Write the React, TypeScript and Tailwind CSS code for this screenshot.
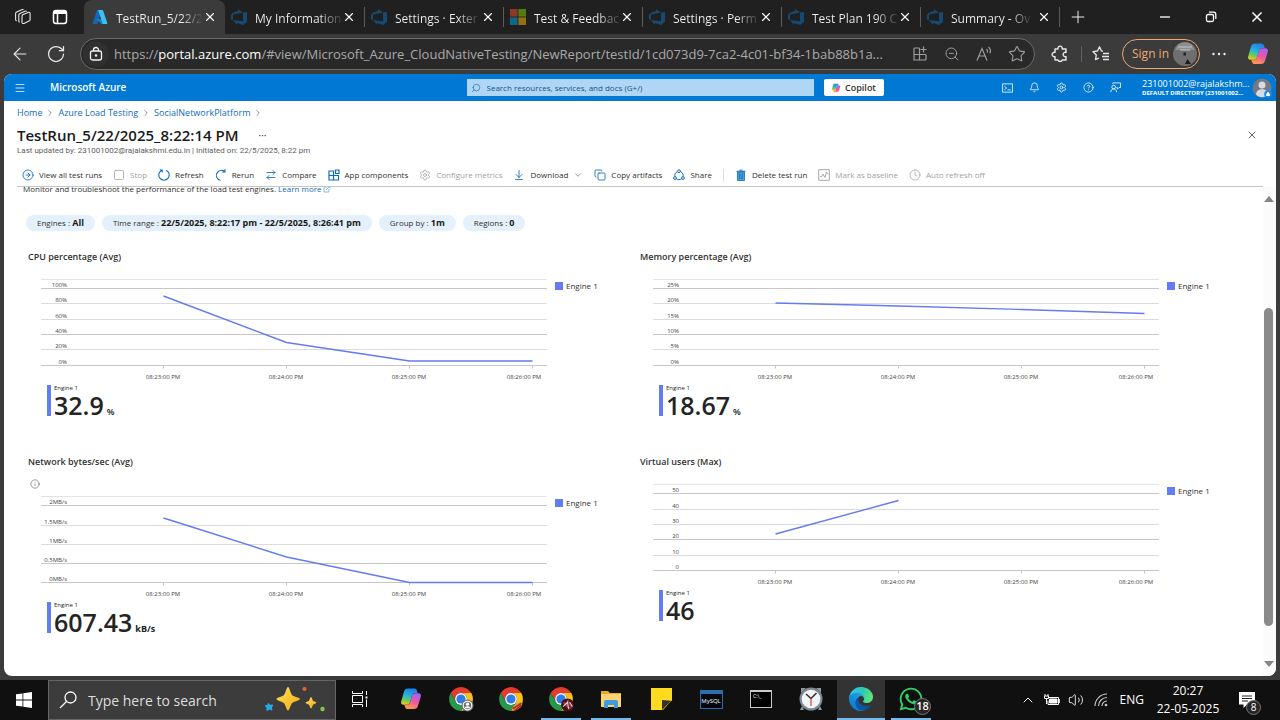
import React from "react";
import {
  ArrowLeft, RotateCw, X, Plus, Star, ZoomOut, Search, Menu, Bell, Settings,
  CircleHelp, Square, Copy, ChevronRight, ChevronDown, ChevronUp, Info, ExternalLink,
  CircleArrowRight, ArrowRightLeft, ArrowDownToLine, Clock, Volume2,
} from "lucide-react";
import { FaWhatsapp } from "react-icons/fa";

function AzureLogo() {
  return (
    <svg viewBox="0 0 96 96" className="size-4 shrink-0" aria-hidden="true">
      <path fill="#1767b0" d="M33.3 6.5h26L32.4 86.6a4.2 4.2 0 0 1-4 2.9H8.2a4.1 4.1 0 0 1-4-5.5L29.4 9.4a4.2 4.2 0 0 1 3.9-2.9z" />
      <path fill="#0f7fd4" d="M71.2 60.3H29.9a1.9 1.9 0 0 0-1.3 3.3l26.5 24.7a4.2 4.2 0 0 0 2.9 1.2h23.3z" />
      <path fill="#3cc0f2" d="M66.6 9.4a4.1 4.1 0 0 0-3.9-2.9H33.7a4.2 4.2 0 0 1 3.9 2.9L62.8 84a4.2 4.2 0 0 1-4 5.5h29a4.2 4.2 0 0 0 4-5.5z" />
    </svg>
  );
}

function DevOpsLogo() {
  return (
    <svg viewBox="0 0 24 24" className="size-4 shrink-0" aria-hidden="true">
      <path fill="#174a73" d="M0 8.877 2.247 5.91l8.405-3.416V.022l7.37 5.393L2.966 8.338v8.225L0 15.707zm24-4.45v14.651l-5.753 4.9-9.303-3.057v3.056l-5.978-7.416 15.057 1.798V5.415z" />
    </svg>
  );
}

function MicrosoftLogo() {
  return (
    <svg viewBox="0 0 16 16" className="size-4 shrink-0" aria-hidden="true">
      <path fill="#8c3a25" d="M0 0h7.6v7.6H0z" />
      <path fill="#557a16" d="M8.4 0H16v7.6H8.4z" />
      <path fill="#0f6687" d="M0 8.4h7.6V16H0z" />
      <path fill="#94700f" d="M8.4 8.4H16V16H8.4z" />
    </svg>
  );
}

function CopilotLogo({ id, className }: { id: string; className: string }) {
  return (
    <svg viewBox="0 0 24 24" className={className} aria-hidden="true">
      <defs>
        <linearGradient id={id + "a"} x1="0.6" y1="0" x2="0.3" y2="1">
          <stop offset="0" stopColor="#1f7fe8" />
          <stop offset="0.45" stopColor="#22b5dd" />
          <stop offset="0.75" stopColor="#6ccb5a" />
          <stop offset="1" stopColor="#f3c51c" />
        </linearGradient>
        <linearGradient id={id + "b"} x1="0.7" y1="0" x2="0.3" y2="1">
          <stop offset="0" stopColor="#a463f5" />
          <stop offset="0.5" stopColor="#f0569f" />
          <stop offset="1" stopColor="#ff9a4d" />
        </linearGradient>
      </defs>
      <path fill={`url(#${id}b)`} d="M15 22H8.5c-1.2 0-2-.7-2.4-1.8L5.4 18H8c1.6 0 2.6-1 3-2.4L13 8.6C13.5 7 14.4 6.2 16 6.2h3.5c1.9 0 2.9 1.6 2.3 3.6L19 18.8C18.4 21 17.1 22 15 22z" />
      <path fill={`url(#${id}a)`} d="M9 1.5h6.5c1.2 0 2 .7 2.4 1.8l.8 2.7H16c-1.6 0-2.6 1-3 2.4l-2 6.8c-.5 1.7-1.4 2.6-3 2.6H4.5c-1.9 0-2.9-1.6-2.3-3.6L5 4.8C5.6 2.6 6.9 1.5 9 1.5z" />
    </svg>
  );
}

function ChromeLogo({ badge }: { badge: string }) {
  return (
    <svg viewBox="0 0 48 48" className="size-[26px]" aria-hidden="true">
      <path fill="#e33b2e" d="M4.95 13A22 22 0 0 1 43.05 13H24a11 11 0 0 0-9.53 16.5z" />
      <path fill="#fbc116" d="M43.05 13A22 22 0 0 1 24 46l9.53-16.5A11 11 0 0 0 24 13z" />
      <path fill="#279847" d="M24 46A22 22 0 0 1 4.95 13l9.52 16.5a11 11 0 0 0 19.06 0z" />
      <circle cx="24" cy="24" r="11" fill="#fff" />
      <circle cx="24" cy="24" r="8.5" fill="#2f7de9" />
      {badge === "guest" && (
        <g>
          <circle cx="36" cy="36" r="11" fill="#6d7175" />
          <circle cx="36" cy="36" r="8" fill="none" stroke="#fff" strokeWidth="2" />
          <circle cx="36" cy="33.5" r="3" fill="#fff" />
          <path d="M30.5 41c1-5 10-5 11 0z" fill="#fff" />
        </g>
      )}
      {badge === "food" && (
        <g>
          <path d="M25 42c4-7 12-13 20-13 1 8-6 16-17 16z" fill="#d9a03c" />
          <path d="m27 42 16-10M31 45l12-9" stroke="#b32820" strokeWidth="3" />
        </g>
      )}
      {badge === "photo" && (
        <g>
          <circle cx="36" cy="35" r="12" fill="#3d1419" />
          <path d="m29 30 12 13M36 26l8 14" stroke="#a8313a" strokeWidth="4" />
          <path d="m28 38 8-8 2 12M40 30l5 8" stroke="#e4d7d7" strokeWidth="2" fill="none" />
        </g>
      )}
    </svg>
  );
}

function EdgeLogo() {
  return (
    <svg viewBox="0 0 256 256" className="size-6" aria-hidden="true">
      <defs>
        <linearGradient id="edge1" x1="0.2" y1="0.5" x2="1" y2="0.5"><stop stopColor="#0c59a4" /><stop offset="1" stopColor="#114a8b" /></linearGradient>
        <linearGradient id="edge2" x1="0.7" y1="0.2" x2="0.2" y2="0.9"><stop stopColor="#1b9de2" /><stop offset="1" stopColor="#0d7bd0" /></linearGradient>
        <linearGradient id="edge3" x1="0" y1="0.4" x2="1" y2="0.6"><stop stopColor="#35c1f1" /><stop offset="0.5" stopColor="#2dc7b8" /><stop offset="1" stopColor="#66eb6e" /></linearGradient>
      </defs>
      <path fill="url(#edge1)" d="M231 190.5c-3.4 1.8-6.9 3.4-10.5 4.7a101.5 101.5 0 0 1-35.9 6.5c-47.3 0-88.5-32.5-88.5-74.3a31.5 31.5 0 0 1 16.4-27.3c-42.8 1.8-53.8 46.4-53.8 72.5 0 74 68.1 81.4 82.8 81.4 7.9 0 19.8-2.3 27-4.6l1.3-.4a128.3 128.3 0 0 0 66.6-52.8 4 4 0 0 0-5.4-5.7z" />
      <path fill="url(#edge2)" d="M105.7 241.4A79.2 79.2 0 0 1 83 220.1a80.7 80.7 0 0 1 29.5-120c3.2-1.5 8.5-4.1 15.6-4a32.4 32.4 0 0 1 25.7 13 31.9 31.9 0 0 1 6.3 18.7c0-.2 24.5-79.6-80-79.6-43.9 0-80 41.7-80 78.2a130.2 130.2 0 0 0 12.1 56 128 128 0 0 0 156.4 67 75.5 75.5 0 0 1-62.9-8z" />
      <path fill="url(#edge3)" d="M152.3 148.9c-.8 1-3.3 2.5-3.3 5.6 0 2.6 1.7 5.1 4.7 7.2 14.4 10 41.5 8.7 41.6 8.7 10.7 0 21.1-2.9 30.3-8.3a61.4 61.4 0 0 0 30.4-52.9c.3-22.4-8-37.3-11.3-43.9C223.5 24 177.7.3 128 .3A128 128 0 0 0 0 126.5c.5-36.5 36.8-66 80-66 3.5 0 23.5.3 42 10.1 16.3 8.6 24.9 18.9 30.8 29.2 6.2 10.7 7.3 24.1 7.3 29.5 0 5.3-2.7 13.3-7.8 19.6z" />
    </svg>
  );
}

const tabs = [
  { title: "My Information", logo: "devops" },
  { title: "Settings · Exter", logo: "devops" },
  { title: "Test & Feedbac", logo: "microsoft" },
  { title: "Settings · Perm", logo: "devops" },
  { title: "Test Plan 190 C", logo: "devops" },
  { title: "Summary - Ov", logo: "devops" },
];

function TabTitle({ children }: { children: React.ReactNode }) {
  return (
    <span className="min-w-0 flex-1 whitespace-nowrap text-[#f2f2f2]">
      <span className="inline-block bg-linear-to-r from-[#f2f2f2] from-75% to-[#3c3c3c] bg-clip-text text-[12px] leading-5 text-transparent">
        {children}
      </span>
    </span>
  );
}

function TabStrip() {
  return (
    <div className="flex h-[34px] shrink-0 bg-[#202020] text-white">
      <div className="flex w-[84px] shrink-0 items-center justify-end gap-5 rounded-br-lg bg-[#202020] pr-4">
        <button aria-label="Workspaces">
          <svg viewBox="0 0 18 18" className="size-[18px]" fill="none" stroke="#e8e8e8" strokeWidth="1.1" strokeLinejoin="round">
            <path d="M8 8.2c0-.8.4-1.300 1.100-1.600l5-2.200c1.100-.4 2 .1 2 1.200v5.900c0 .8-.4 1.300-1.100 1.600l-5 2.300c-1.100.4-2-.1-2-1.200z" />
            <path d="M5.800 14.300c-.7-.2-1-.7-1-1.300V7c0-.8.400-1.300 1.100-1.600l5-2.200c.8-.3 1.500-.2 1.800.4" />
            <path d="M2.600 12.900c-.7-.2-1-.7-1-1.300V5.500c0-.8.400-1.300 1.100-1.600l5-2.200c.8-.3 1.500-.2 1.800.4" />
          </svg>
        </button>
        <button aria-label="Tab actions">
          <svg viewBox="0 0 16 16" className="size-4" fill="none" stroke="#fff" strokeWidth="1.5">
            <rect x="1.5" y="1.5" width="13" height="13" rx="2.5" />
            <path d="M2 3.5h12" strokeWidth="3" /><path d="M5.500 4v10" />
          </svg>
        </button>
      </div>
      <div className="flex w-[141px] shrink-0 items-center gap-2 rounded-t-lg bg-[#3b3b3b] pr-2 pl-2">
        <AzureLogo />
        <TabTitle>TestRun_5/22/2</TabTitle>
        <button aria-label="Close tab"><X className="size-3.5" strokeWidth={2} /></button>
      </div>
      {tabs.map((t, i) => (
        <div key={i} className={i === 0 ? "flex w-[140px] shrink-0 items-center gap-2 rounded-bl-lg bg-[#202020] pl-1.5" : "flex w-[139px] shrink-0 items-center gap-2 pl-1.5"}>
          {t.logo === "microsoft" ? <MicrosoftLogo /> : <DevOpsLogo />}
          <TabTitle>{t.title}</TabTitle>
          <button aria-label="Close tab"><X className="size-3.5" strokeWidth={2} /></button>
          <span className="h-5 w-px bg-[#5c5c5c]" />
        </div>
      ))}
      <button aria-label="New tab" className="ml-2 shrink-0"><Plus className="size-5" strokeWidth={1.1} /></button>
      <div className="ml-auto flex shrink-0 items-center gap-[34px] pr-[17px]">
        <button aria-label="Minimize"><svg viewBox="0 0 12 12" className="size-3" stroke="#fff" strokeWidth="1.3"><path d="M1 6h10" /></svg></button>
        <button aria-label="Restore">
          <svg viewBox="0 0 12 12" className="size-3" fill="none" stroke="#fff" strokeWidth="1.3"><rect x="1.5" y="3.5" width="7" height="7" rx="1.5" /><path d="M4 1.200h4.500c1.400 0 2.300.8 2.300 2.300V8" /></svg>
        </button>
        <button aria-label="Close window"><svg viewBox="0 0 12 12" className="size-3" stroke="#fff" strokeWidth="1.5"><path d="m1.500 1.500 9 9M10.500 1.500l-9 9" /></svg></button>
      </div>
    </div>
  );
}

function AddressBar() {
  return (
    <div className="flex h-10 shrink-0 items-center bg-[#3b3b3b] pl-2.5 text-[#e8e8e8]">
      <button aria-label="Back" className="w-5"><ArrowLeft className="size-5" strokeWidth={1.3} /></button>
      <button aria-label="Reload" className="ml-4 w-5"><RotateCw className="size-5" strokeWidth={1.5} /></button>
      <div className="ml-3.5 flex h-8 min-w-0 flex-1 items-center rounded-full border border-[#6b6b6b] bg-[#292929] pr-2 pl-0.5">
        <span className="flex size-[26px] shrink-0 items-center justify-center rounded-full bg-[#303030]">
          <svg viewBox="0 0 16 16" className="size-4" fill="none" stroke="#f2f2f2" strokeWidth="1.3"><rect x="2.500" y="5" width="11" height="9" rx="2" /><path d="M5.500 5V4a2.500 2.500 0 0 1 5 0v1" /><circle cx="8" cy="9.500" r="0.6" fill="#fff" /></svg>
        </span>
        <span className="ml-[5px] min-w-0 flex-1 truncate text-[13px] leading-6 text-[#a9a9a9]">
          https://<span className="text-white">portal.azure.com</span>/#view/Microsoft_Azure_CloudNativeTesting/NewReport/testId/1cd073d9-7ca2-4c01-bf34-1bab88b1a...
        </span>
        <div className="ml-2.5 flex shrink-0 items-center gap-4 text-[#9d9d9d]">
          <button aria-label="Install app">
            <svg viewBox="0 0 16 16" className="size-4" fill="none" stroke="currentColor" strokeWidth="1.2"><path d="M7.500 2H3a1 1 0 0 0-1 1v11h11a1 1 0 0 0 1-1V8.500M2 8.500h12M7.500 2v12M11.500.500v6M8.500 3.500h6" /></svg>
          </button>
          <button aria-label="Zoom out"><ZoomOut className="size-4" strokeWidth={1.5} /></button>
          <button aria-label="Read aloud">
            <svg viewBox="0 0 16 16" className="size-4" fill="none" stroke="currentColor" strokeWidth="1.2"><path d="M1 14.500 6 2.500l5 12M3 10h6M10.500 3c1 .8 1.300 2 .8 3.500M12.500 1c1.900 1.500 2.400 4 1.300 6.300" /></svg>
          </button>
          <button aria-label="Add to favorites"><Star className="size-[18px]" strokeWidth={1.5} /></button>
        </div>
      </div>
      <div className="flex shrink-0 items-center pl-4">
        <button aria-label="Extensions">
          <svg viewBox="0 0 18 18" className="size-[18px]" fill="none" stroke="currentColor" strokeWidth="1.4" strokeLinejoin="round">
            <path d="M4 4h3a2.200 2.200 0 1 1 4.200 0H15v3.400a2.200 2.200 0 1 0 0 4.200V15h-3.800a2.200 2.200 0 0 1-4.200 0H4v-3.400a2.200 2.200 0 1 1 0-4.200z" />
          </svg>
        </button>
        <span className="ml-3 h-4 w-px bg-[#606060]" />
        <button aria-label="Favorites" className="ml-2.5">
          <svg viewBox="0 0 18 18" className="size-[18px]" fill="none" stroke="currentColor" strokeWidth="1.3" strokeLinejoin="round"><path d="M11 6.200 9.500 6 7.500 1.800 5.500 6l-4.500.7 3.300 3.300-.8 4.700L7 13M11 8.500h6M10 11.500h7M11 14.500h6" /></svg>
        </button>
        <button className="ml-3 flex h-[30px] w-[78px] items-center justify-between rounded-full border border-[#f0a870] pr-0.5 pl-[9px] text-[12px] text-[#f0a870]">
          <span className="whitespace-nowrap">Sign in</span>
          <svg viewBox="0 0 24 24" className="size-6 shrink-0" aria-hidden="true">
            <circle cx="12" cy="12" r="12" fill="#6f6f6f" /><path d="M5 2.500A12 12 0 0 1 19 2.500L22 8H2z" fill="#8d8d8d" /><path d="M5 5h14M7 8h10" stroke="#c6c6c6" /><path d="M10.500 10.500h2.500v3h-2.500z" fill="#222" /><path d="M12 22l2.500-5 3.500 5z" fill="#1b1b1b" />
          </svg>
        </button>
        <button aria-label="Settings and more" className="ml-3">
          <svg viewBox="0 0 14 4" className="h-1 w-3.5" fill="#f0f0f0"><circle cx="1.500" cy="2" r="1.200" /><circle cx="7" cy="2" r="1.200" /><circle cx="12.500" cy="2" r="1.200" /></svg>
        </button>
        <button aria-label="Copilot" className="mr-2.5 ml-5"><CopilotLogo id="side" className="size-6" /></button>
      </div>
    </div>
  );
}

function PortalHeader() {
  return (
    <header className="flex h-[27px] shrink-0 items-center bg-[#0078d4] text-white">
      <div className="flex flex-1 items-center">
        <button aria-label="Show portal menu" className="ml-2.5"><Menu className="size-3" strokeWidth={1.5} /></button>
        <a href="#" className="ml-6 text-[10px] font-semibold">Microsoft Azure</a>
      </div>
      <label className="flex h-[17px] w-[347px] items-center gap-1.5 bg-[#b0d6f5] pl-1">
        <Search className="size-2.5 -scale-x-100 text-[#1b6ab0]" strokeWidth={1.5} />
        <input type="text" aria-label="Search" placeholder="Search resources, services, and docs (G+/)" className="min-w-0 flex-1 bg-transparent text-[8px] text-[#10558f] outline-none placeholder:text-[#10558f]" />
      </label>
      <div className="flex flex-1 items-center justify-between">
        <button className="ml-2.5 flex h-[17px] w-[60px] items-center justify-center gap-1 rounded-xs bg-white text-[9px] font-semibold text-[#323130]"><CopilotLogo id="head" className="size-2.5" />Copilot</button>
        <div className="flex items-center">
          <div className="flex items-center gap-4">
            <button aria-label="Cloud Shell"><svg viewBox="0 0 12 10" className="h-2.5 w-[11px]" fill="none" stroke="#fff" strokeWidth="0.9"><path d="M.5.500h11v9H.5zM2.500 3l2.500 2-2.500 2M6 7h3.500" /></svg></button>
            <button aria-label="Notifications"><Bell className="size-[11px]" strokeWidth={1.7} /></button>
            <button aria-label="Settings"><Settings className="size-[11px]" strokeWidth={1.7} /></button>
            <button aria-label="Help"><CircleHelp className="size-[11px]" strokeWidth={1.7} /></button>
            <button aria-label="Feedback"><svg viewBox="0 0 12 12" className="size-[11px]" fill="none" stroke="#fff" strokeWidth="0.9"><circle cx="4" cy="5.500" r="2" /><path d="M.8 11c.2-2.300 1.500-3.400 3.200-3.400S7 8.700 7.200 11M3 2V1h8.500v5H9.800L8 7.800V6H7" /></svg></button>
          </div>
          <div className="ml-[21px] w-[110px] whitespace-nowrap">
            <div className="text-[9px] leading-[11px]">231001002@rajalakshm...</div>
            <div className="text-[6px] leading-[9px] font-bold">DEFAULT DIRECTORY (231001002...</div>
          </div>
          <svg viewBox="0 0 20 20" className="mr-1 size-5" aria-hidden="true">
            <circle cx="10" cy="10" r="9.500" fill="#747a85" /><circle cx="10" cy="7" r="3.500" fill="#d7dade" /><path d="M4 16.500c0-7 12-7 12 0-3 3.500-9 3.500-12 0z" fill="#d7dade" /><circle cx="16" cy="16" r="3.800" fill="#1f87df" /><path d="M14.200 15.500h3.600V18h-3.600zM15 15.500v-1.200h2v1.200" fill="#fff" />
          </svg>
        </div>
      </div>
    </header>
  );
}

function Refresh() {
  return <svg viewBox="0 0 12 12" className="size-3" fill="none" stroke="currentColor" strokeWidth="1.1"><path d="M4 1.200A5.200 5.200 0 1 0 8 1.200M4.200 3.500V1H1.700" /></svg>;
}
function Rerun() {
  return <svg viewBox="0 0 12 12" className="size-3" fill="none" stroke="currentColor" strokeWidth="1.1"><path d="M5.500 11.300A5 5 0 0 1 2.500 3.200C4 1.300 7 .8 9.500 2.300M10 .300v2.700H7.300" /></svg>;
}
function AppIcon() {
  return <svg viewBox="0 0 12 12" className="size-3" fill="none" stroke="currentColor" strokeWidth="1.2"><path d="M1 2h4.500v9H1zM1 6.500h9.500V11H1zM7.500 1h3.500v3.500H7.500z" /></svg>;
}
function ShareIcon() {
  return <svg viewBox="0 0 12 12" className="size-3" fill="none" stroke="currentColor" strokeWidth="1"><circle cx="6" cy="6.500" r="4.200" /><circle cx="6" cy="2.200" r="1.400" fill="#fff" /><circle cx="2" cy="9" r="1.400" fill="#fff" /><circle cx="10" cy="9" r="1.400" fill="#fff" /></svg>;
}
function Trash() {
  return <svg viewBox="0 0 12 12" className="size-3"><path fill="#4a9fdf" stroke="#0f6cbd" strokeWidth="0.8" d="M2.500 3h7v8.500h-7z" /><path d="M1.500 2.300h9M4.500 1.200h3M4.800 4.500v5.500M7.200 4.500v5.500" stroke="#0f6cbd" strokeWidth="1" /></svg>;
}
function Baseline() {
  return <svg viewBox="0 0 12 12" className="size-3" fill="none" stroke="currentColor" strokeWidth="0.9"><path d="M.7.700h10.600v10.600H.7zM2 7.500h1.500L5 5l2 3.500L8.500 3 10 5" /></svg>;
}

function Command({ icon, label, disabled, chevron }: { icon: React.ReactNode; label: string; disabled?: boolean; chevron?: boolean }) {
  return (
    <button disabled={disabled} className={disabled ? "flex items-center gap-[5px] whitespace-nowrap text-[#a19f9d]" : "flex items-center gap-[5px] whitespace-nowrap text-[#323130]"}>
      <span className={disabled ? "text-[#a19f9d]" : "text-[#0f6cbd]"}>{icon}</span>
      {label}
      {chevron && <ChevronDown className="size-2.5 text-[#605e5c]" strokeWidth={1.5} />}
    </button>
  );
}

function CommandBar() {
  return (
    <div className="mr-[13px] ml-[13px] flex h-6 shrink-0 items-center gap-[11px] border-b border-[#c8c6c4] pl-[5px] text-[8px]">
      <Command icon={<CircleArrowRight className="size-3" strokeWidth={1.7} />} label="View all test runs" />
      <Command disabled icon={<Square className="size-3" strokeWidth={1.5} />} label="Stop" />
      <Command icon={<Refresh />} label="Refresh" />
      <Command icon={<Rerun />} label="Rerun" />
      <Command icon={<ArrowRightLeft className="size-3" strokeWidth={1.7} />} label="Compare" />
      <Command icon={<AppIcon />} label="App components" />
      <Command disabled icon={<Settings className="size-3" strokeWidth={1.5} />} label="Configure metrics" />
      <Command chevron icon={<ArrowDownToLine className="size-3" strokeWidth={1.7} />} label="Download" />
      <Command icon={<Copy className="size-3" strokeWidth={1.7} />} label="Copy artifacts" />
      <Command icon={<ShareIcon />} label="Share" />
      <span className="h-3 w-px bg-[#dddddd]" />
      <Command icon={<Trash />} label="Delete test run" />
      <Command disabled icon={<Baseline />} label="Mark as baseline" />
      <Command disabled icon={<Clock className="size-3" strokeWidth={1.5} />} label="Auto refresh off" />
    </div>
  );
}

function Pill({ name, value }: { name: string; value: string }) {
  return (
    <button className="h-4 rounded-full bg-[#e4f0fb] px-[11px] text-[8px] leading-4 whitespace-nowrap text-[#323130]">
      {name} : <span className="text-[9px] font-bold text-[#1b1a19]">{value}</span>
    </button>
  );
}

type ChartData = {
  title: string;
  value: string;
  unit?: string;
  boldUnit?: boolean;
  info?: boolean;
  labels: string[];
  lines: number[];
  points: string;
};

const charts: ChartData[] = [
  { title: "CPU percentage (Avg)", value: "32.9", unit: "%", labels: ["100%", "80%", "60%", "40%", "20%", "0%"], lines: [12.5, 27.5, 43.5, 58.5, 73.5, 89.5], points: "123.5,20 246.5,66.5 369.5,85 492.5,85" },
  { title: "Memory percentage (Avg)", value: "18.67", unit: "%", labels: ["25%", "20%", "15%", "10%", "5%", "0%"], lines: [12.5, 27.5, 43.5, 58.5, 73.5, 89.5], points: "123.5,27 246.5,30 369.5,33.5 492.5,37.5" },
  { title: "Network bytes/sec (Avg)", value: "607.43", unit: "kB/s", boldUnit: true, info: true, labels: ["2MB/s", "1.5MB/s", "1MB/s", "0.5MB/s", "0MB/s"], lines: [12.5, 32.5, 51.5, 70.5, 89.5], points: "123.5,25 246.5,64 369.5,89.5 492.5,89.5" },
  { title: "Virtual users (Max)", value: "46", labels: ["50", "40", "30", "20", "10", "0"], lines: [12.5, 28.5, 43.5, 58.5, 74.5, 89.5], points: "123.5,53 246.5,19.5" },
];

function Chart({ chart }: { chart: ChartData }) {
  return (
    <section className="min-h-[205px]">
      <h2 className="text-[9px] leading-[14px] font-semibold text-[#323130]">{chart.title}</h2>
      <div className={chart.info ? "flex h-6 items-center pt-1.5 pl-0.5" : "h-3"}>
        {chart.info && <Info className="size-2.5 text-[#605e5c]" strokeWidth={1.5} />}
      </div>
      <div className="flex items-start pl-3">
        <svg viewBox="0 0 508 108" className="min-w-0 flex-1" role="img" aria-label={chart.title}>
          <path d="M1 3.5H507" stroke="#e4e4e4" />
          {chart.lines.map((y, i) => (
            <g key={i}>
              <path d={`M1 ${y}H507`} stroke={i % 3 === 0 || i === chart.lines.length - 1 ? "#c6c6c6" : "#dcdcdc"} />
              <text x="27" y={y - 2} textAnchor="end" fontSize="6" fill="#444">{chart.labels[i]}</text>
            </g>
          ))}
          <path d="M123.5 90v2.5M246.5 90v2.5M369.5 90v2.5M492.5 90v2.5" stroke="#c6c6c6" />
          <g fontSize="6" fill="#444" textAnchor="middle">
            <text x="123" y="103">08:23:00 PM</text>
            <text x="246" y="103">08:24:00 PM</text>
            <text x="369" y="103">08:25:00 PM</text>
            <text x="484" y="103">08:26:00 PM</text>
          </g>
          <polyline points={chart.points} fill="none" stroke="#637cef" strokeWidth="1.4" strokeLinejoin="round" />
        </svg>
        <div className="flex w-[92px] shrink-0 items-center gap-[3px] pt-1 pl-[7px] text-[8px] text-[#323130]">
          <span className="size-2 bg-[#637cef]" />Engine 1
        </div>
      </div>
      <div className="mt-px ml-[19px] flex h-[31px] border-l-4 border-[#637cef] pl-[3px] text-[#242424]">
        <div>
          <div className="text-[6px] leading-[7px]">Engine 1</div>
          <div className="text-[25px] leading-[26px] font-semibold">
            {chart.value}
            {chart.unit && <span className={chart.boldUnit ? "ml-[3px] text-[9px] font-bold" : "ml-[3px] text-[9px] font-semibold"}>{chart.unit}</span>}
          </div>
        </div>
      </div>
    </section>
  );
}

function Scrollbar() {
  return (
    <div className="flex w-[13px] shrink-0 flex-col items-center bg-[#fbfbfb] pt-[9px] pr-0.5 pb-[9px]">
      <svg viewBox="0 0 10 6" className="h-1.5 w-2.5 shrink-0" fill="#858585"><path d="m0 6 5-6 5 6z" /></svg>
      <span className="flex-[106]" />
      <span className="w-[9px] flex-[317] rounded-full bg-[#8a8a8a]" />
      <span className="flex-[35]" />
      <svg viewBox="0 0 10 6" className="h-1.5 w-2.5 shrink-0" fill="#858585"><path d="m0 0 5 6 5-6z" /></svg>
    </div>
  );
}

function Portal() {
  return (
    <main className="mx-1 mb-1 flex min-h-0 flex-1 flex-col overflow-hidden rounded-lg bg-white text-[#323130]">
      <PortalHeader />
      <nav aria-label="Breadcrumb" className="flex h-6 shrink-0 items-center gap-[3px] pl-[13px] text-[9px] text-[#0f6cbd]">
        <a href="#">Home</a><ChevronRight className="size-2.5 text-[#605e5c]" strokeWidth={1.5} />
        <a href="#">Azure Load Testing</a><ChevronRight className="size-2.5 text-[#605e5c]" strokeWidth={1.5} />
        <a href="#">SocialNetworkPlatform</a><ChevronRight className="size-2.5 text-[#605e5c]" strokeWidth={1.5} />
      </nav>
      <div className="flex h-5 shrink-0 items-center pr-[18px] pl-[13px]">
        <h1 className="text-[15px] leading-5 font-semibold text-[#1b1a19]">TestRun_5/22/2025_8:22:14 PM</h1>
        <button aria-label="More" className="ml-5 text-[10px] leading-5">···</button>
        <button aria-label="Close" className="ml-auto"><X className="size-3" strokeWidth={1.5} /></button>
      </div>
      <p className="h-[18px] shrink-0 pl-[13px] font-['Roboto','Open_Sans',sans-serif] text-[8px] leading-3 text-[#605e5c]">Last updated by: 231001002@rajalakshmi.edu.in | Initiated on: 22/5/2025, 8:22 pm</p>
      <CommandBar />
      <div className="flex min-h-0 flex-1">
        <div className="min-w-0 flex-1 overflow-hidden pr-[11px]">
          <div className="flex h-2 items-end overflow-hidden pl-[19px] text-[8px] leading-3">
            <span>Monitor and troubleshoot the performance of the load test engines. <a href="#" className="text-[#0f6cbd]">Learn more</a></span>
            <ExternalLink className="mb-0.5 ml-0.5 size-2 text-[#0f6cbd]" strokeWidth={1.5} />
          </div>
          <div className="mt-5 flex gap-[7px] pl-[22px]">
            <Pill name="Engines" value="All" />
            <Pill name="Time range" value="22/5/2025, 8:22:17 pm - 22/5/2025, 8:26:41 pm" />
            <Pill name="Group by" value="1m" />
            <Pill name="Regions" value="0" />
          </div>
          <div className="mt-[19px] grid grid-cols-2 pl-6">
            {charts.map((c) => <Chart key={c.title} chart={c} />)}
          </div>
        </div>
        <Scrollbar />
      </div>
    </main>
  );
}

function TaskButton({ label, state, children }: { label: string; state?: "open" | "active"; children: React.ReactNode }) {
  return (
    <button aria-label={label} className={state === "active" ? "flex h-10 w-12 shrink-0 flex-col items-center bg-[#333333]" : "flex h-10 w-12 shrink-0 flex-col items-center"}>
      <span className="flex h-[38px] items-center">{children}</span>
      {state && <span className={state === "active" ? "h-0.5 w-12 bg-[#76b9ed]" : "h-0.5 w-10 bg-[#76b9ed]"} />}
    </button>
  );
}

function Taskbar() {
  return (
    <footer className="flex h-10 shrink-0 items-center bg-[#101010] text-white">
      <button aria-label="Start" className="flex w-12 shrink-0 justify-center">
        <svg viewBox="0 0 16 16" className="size-4" fill="#fff"><path d="M0 2.300 6.500 1.400v6.200H0zM7.300 1.300 16 0v7.600H7.300zM0 8.400h6.500v6.200L0 13.700zM7.300 8.400H16V16l-8.700-1.300z" /></svg>
      </button>
      <label className="flex h-10 w-72 shrink-0 items-center border border-[#666] bg-[#3c3c3c] px-2.5">
        <svg viewBox="0 0 18 18" className="size-[18px] shrink-0" fill="none" stroke="#fff" strokeWidth="1.3"><circle cx="11.500" cy="6.500" r="5.500" /><path d="M7.500 10.500 1 17" /></svg>
        <input type="text" aria-label="Search" placeholder="Type here to search" className="ml-[11px] min-w-0 flex-1 bg-transparent text-[14px] outline-none placeholder:text-[#dddddd]" />
        <svg viewBox="0 0 60 26" className="h-[26px] w-[60px] shrink-0" aria-hidden="true">
          <defs><linearGradient id="spark" x1="0" y1="0" x2="1" y2="1"><stop stopColor="#ffe35c" /><stop offset="1" stopColor="#f3a712" /></linearGradient></defs>
          <path fill="url(#spark)" d="M23 0c1.500 0 2.500 6.500 4.200 8.200S35 10.300 35 12s-6 2.200-7.800 4S24.500 23.500 23 23.500s-2.300-5.700-4.200-7.500S11.500 13.700 11.500 12s5.500-2 7.300-3.800S21.500 0 23 0z" />
          <path fill="url(#spark)" d="M46 10c1 0 1.200 3 2 3.800s3.500 1.200 3.500 2-2.700 1-3.500 2-1 3.700-2 3.700-1.200-2.700-2-3.700-3.500-1.200-3.500-2 2.700-1.200 3.500-2S45 10 46 10z" />
          <path fill="#27a8e8" d="M3 16c1 0 1.500 1.500 2.300 1.700s2.500-.5 2.800.3-1.100 1.700-1.200 2.500 1 2.300.2 2.800-1.900-.6-2.700-.5-2 1.500-2.700.9.100-2.100-.2-2.900S-.300 19.300 0 18.600s1.900-.3 2.300-.9z" />
          <circle cx="39.500" cy="2" r="2.100" fill="#e0613a" /><circle cx="57.500" cy="22" r="2.200" fill="#8ac349" />
        </svg>
      </label>
      <TaskButton label="Task view">
        <svg viewBox="0 0 18 16" className="h-4 w-[18px]" fill="none" stroke="#fff" strokeWidth="1"><path d="M1.500 0v2.500h10V0M1.500 16v-2.500h10V16M1.500 4.500h10v7h-10zM15.500 0v4M15.500 8.500V16" /><path d="M14.500 5.500h2v2h-2z" fill="#fff" stroke="none" /></svg>
      </TaskButton>
      <div className="ml-[3px] flex shrink-0 gap-0.5">
        <TaskButton label="Copilot"><CopilotLogo id="task" className="size-6" /></TaskButton>
        <TaskButton label="Chrome, guest"><ChromeLogo badge="guest" /></TaskButton>
        <TaskButton label="Chrome, first profile"><ChromeLogo badge="food" /></TaskButton>
        <TaskButton label="Chrome, second profile" state="open"><ChromeLogo badge="photo" /></TaskButton>
        <TaskButton label="File Explorer" state="open">
          <svg viewBox="0 0 22 20" className="h-5 w-[22px]"><path fill="#e9a825" d="M1 2h7l2 2h11v5H1z" /><path fill="#fbd56b" d="M1 5h20v13H1z" /><path fill="#3f9be0" d="M4 19v-6a2 2 0 0 1 2-2h10a2 2 0 0 1 2 2v6h-4v-3H8v3z" /></svg>
        </TaskButton>
        <TaskButton label="Sticky Notes">
          <svg viewBox="0 0 21 22" className="h-[22px] w-[21px]"><path fill="#ffda1f" d="M0 0h21v12l-9 10H0z" /><path fill="#333" d="M11 22V12h10z" /><path fill="#e6b800" d="M11 12h10v1z" /></svg>
        </TaskButton>
        <TaskButton label="MySQL">
          <span className="flex h-[19px] w-[23px] items-center justify-center border border-t-4 border-[#2c6dab] bg-[#04070d] text-[6px] leading-none text-white">MySQL</span>
        </TaskButton>
        <TaskButton label="Command Prompt">
          <span className="h-[18px] w-[22px] border border-t-2 border-[#c9c9c9] bg-black pl-0.5 text-left text-[5px] leading-2 text-white">C:\_</span>
        </TaskButton>
        <TaskButton label="Clock">
          <svg viewBox="0 0 26 26" className="size-[26px]"><path d="M3 2h5l-5 5zM23 2h-5l5 5zM4 20l-2 4h4zM22 20l2 4h-4z" fill="#8d98a3" /><circle cx="13" cy="13" r="11.500" fill="#7e8993" /><circle cx="13" cy="13" r="9.300" fill="#f3f4f5" /><path d="m8 8 5 4.500L18.500 7" fill="none" stroke="#333" strokeWidth="1.6" /><path d="M13 12.500V20" stroke="#d04437" strokeWidth="1.2" /></svg>
        </TaskButton>
        <TaskButton label="Edge" state="active"><EdgeLogo /></TaskButton>
        <TaskButton label="WhatsApp" state="open">
          <span className="relative">
            <FaWhatsapp className="size-[26px] text-[#2bd366]" />
            <span className="absolute top-3 left-4 flex size-[17px] items-center justify-center rounded-full border border-[#777] bg-[#262626] text-[11px] font-semibold">18</span>
          </span>
        </TaskButton>
      </div>
      <div className="ml-auto flex shrink-0 items-center pr-[25px]">
        <ChevronUp className="size-4" strokeWidth={1.5} />
        <svg viewBox="0 0 16 12" className="ml-2 h-3 w-4" fill="none" stroke="#fff" strokeWidth="1"><path d="M4 3.500h10.500v7H4v-4M14.500 5.500h1.200v3h-1.200" /><path d="M5.500 5H13v4H5.500z" fill="#fff" /><path d="M1 0v2M4 0v2M.5 2h4v2.500h-4zM2.500 4.500V10" /></svg>
        <Volume2 className="ml-2 size-4" strokeWidth={1.3} />
        <svg viewBox="0 0 14 14" className="ml-2.5 size-3.5" fill="none" stroke="#c9c9c9" strokeWidth="1.1"><path d="M1 13A12 12 0 0 1 13 1M4.500 13A8.500 8.500 0 0 1 13 4.500M8 13a5 5 0 0 1 5-5" /><circle cx="12" cy="12" r="0.8" fill="#fff" /></svg>
        <span className="ml-3 text-[12px]">ENG</span>
        <span className="ml-3 w-16 text-center text-[12px] leading-[18px] whitespace-nowrap">20:27<br />22-05-2025</span>
        <button aria-label="Notifications" className="relative ml-[19px] size-4">
          <svg viewBox="0 0 16 16" className="size-4"><path fill="#fff" d="M0 0h16v12.500H8L4.500 16v-3.500H0z" /><path d="M3 4h10M3 6.500h10M3 9h6" stroke="#222" /></svg>
          <span className="absolute top-2 left-[7px] flex size-[15px] items-center justify-center rounded-full border border-[#777] bg-[#262626] text-[10px]">8</span>
        </button>
      </div>
    </footer>
  );
}

export default function App() {
  return (
    <div className="flex h-screen min-w-[1180px] flex-col overflow-hidden bg-[#3b3b3b] font-['Open_Sans','Noto_Sans',sans-serif]">
      <TabStrip />
      <AddressBar />
      <Portal />
      <Taskbar />
    </div>
  );
}
